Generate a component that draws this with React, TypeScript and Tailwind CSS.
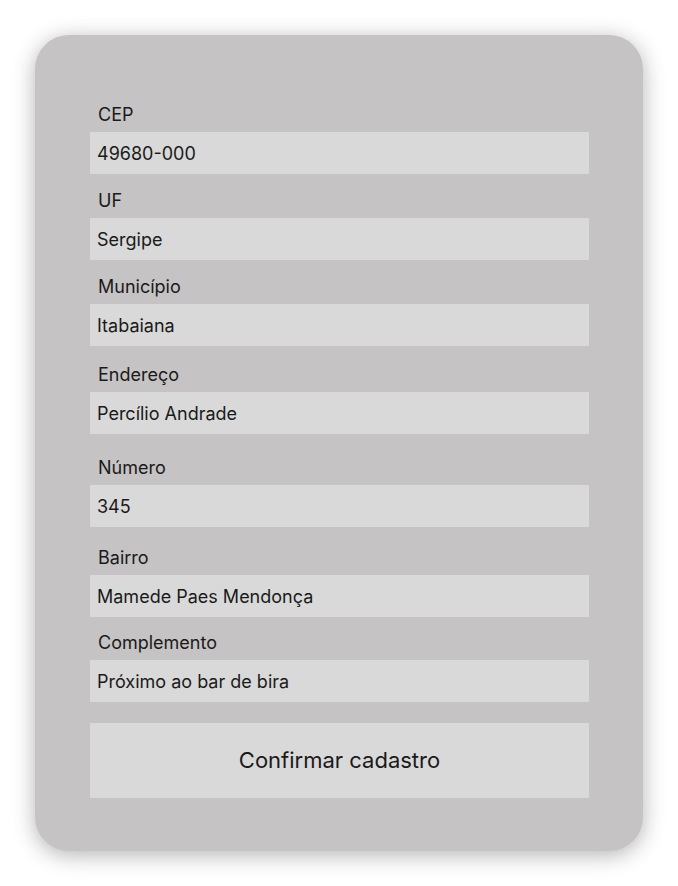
const fields = [
  { label: 'CEP', value: '49680-000', mt: 'mt-0' },
  { label: 'UF', value: 'Sergipe', mt: 'mt-[16px]' },
  { label: 'Município', value: 'Itabaiana', mt: 'mt-[16px]' },
  { label: 'Endereço', value: 'Percílio Andrade', mt: 'mt-[18px]' },
  { label: 'Número', value: '345', mt: 'mt-[23px]' },
  { label: 'Bairro', value: 'Mamede Paes Mendonça', mt: 'mt-[20px]' },
  { label: 'Complemento', value: 'Próximo ao bar de bira', mt: 'mt-[15px]' },
];

export default function App() {
  return (
    <div className="min-h-screen bg-white pt-[35px] pl-[35px] text-[#1a1a1a]" style={{ fontFamily: 'Inter, "Noto Sans", sans-serif' }}>
      <div className="w-[608px] h-[816px] rounded-[34px] bg-[#c5c3c4] shadow-[0_4px_22px_rgba(0,0,0,0.3)] pt-[69px] pl-[55px]">
        <div className="w-[499px] flex flex-col">
          {fields.map((f) => (
            <div key={f.label} className={f.mt}>
              <label className="block pl-2 text-[18px] leading-[22px] mb-[6px]">{f.label}</label>
              <input
                readOnly
                value={f.value}
                className="w-full h-[42px] bg-[#d9d9d9] px-[7px] text-[18px] text-[#1a1a1a] outline-none"
              />
            </div>
          ))}
          <button className="mt-[21px] h-[75px] w-full bg-[#d9d9d9] text-[22px] text-[#1a1a1a]">
            Confirmar cadastro
          </button>
        </div>
      </div>
    </div>
  );
}
